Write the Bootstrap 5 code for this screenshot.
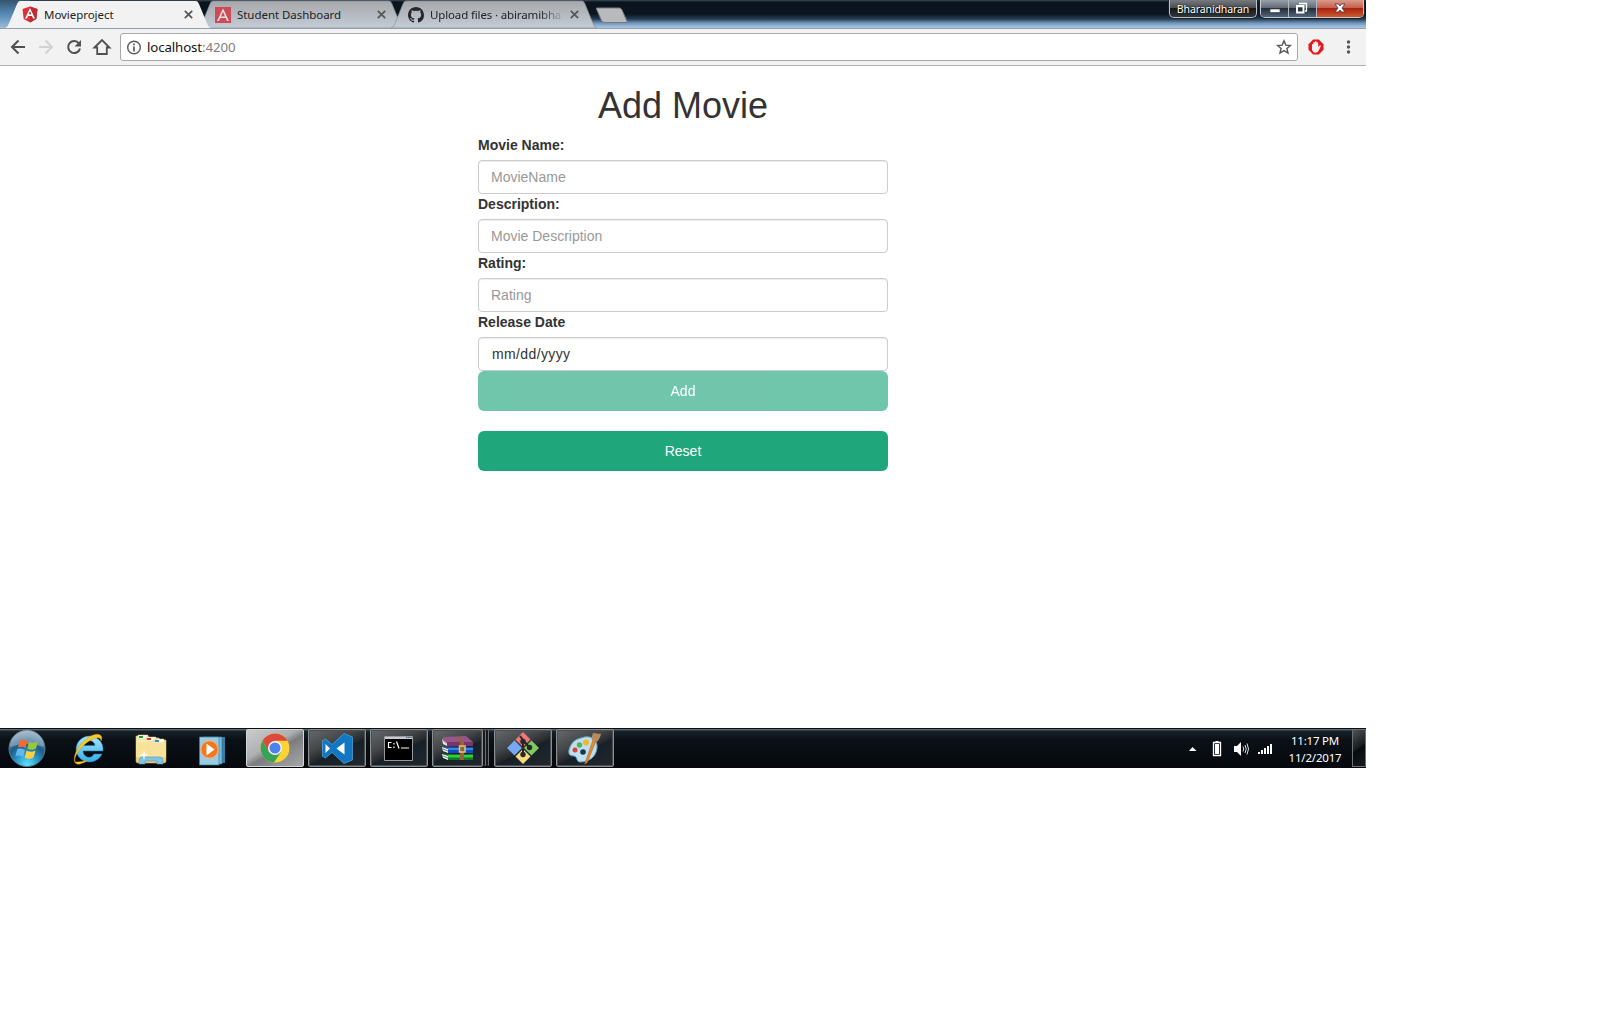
<!DOCTYPE html>
<html lang="en">
<head>
<meta charset="utf-8">
<title>Movieproject</title>
<link rel="stylesheet" href="https://cdn.jsdelivr.net/npm/bootstrap@5.3.0/dist/css/bootstrap.min.css">
<script src="https://cdn.jsdelivr.net/npm/bootstrap@5.3.0/dist/js/bootstrap.bundle.min.js"></script>
<style>
body{background:#fff;overflow:hidden}
svg{display:block;flex:none}
.desk{width:1366px;height:768px;font-family:"Noto Sans","Open Sans",sans-serif;color:#222}
.strip{height:28px;padding-left:5px;background:linear-gradient(#3b4b5a 0,#0b141d 2px,#0b1520 14px,#263c52 19px,#6f94b8 23px,#a3c2e2 27px);position:relative}
.strip:before{content:"";position:absolute;left:0;top:0;width:30px;height:28px;background:linear-gradient(#34536e,#5689b4 50%,#9dbbd9)}
.tab-item{width:206px;height:28px;margin-right:-13px;padding:1px 15px 0 17px;position:relative;font-size:11.5px;letter-spacing:-.05px}
.tab-item .shape{position:absolute;left:0;top:0}
.tab-item .tab-text{position:relative;white-space:nowrap;line-height:27px;margin-left:6px;width:134px;margin-right:6px}
.tab-item .ico,.tab-item .x{position:relative}
.front{z-index:2}
.tab-item .fade-text{letter-spacing:-.14px;-webkit-mask-image:linear-gradient(90deg,#000 82%,rgba(0,0,0,.15) 98%)}
.newtab{margin:7px 0 0 12px}
.user-btn{width:88px;height:18px;border:1px solid #b9c0c6;border-top:0;border-radius:0 0 5px 5px;background:linear-gradient(#777b7f,#4b4f53 45%,#15191d 50%,#32373c);color:#fff;font-size:10.5px;line-height:18px;text-align:center;box-shadow:0 0 0 1px #1a222b;text-shadow:0 0 2px #000;letter-spacing:-.1px}
.win-btns{width:104px;height:18px;margin:0 2px 0 3px;border:1px solid #c4cbd2;border-top:0;border-radius:0 0 5px 5px;overflow:hidden;box-shadow:0 0 0 1px #1a222b}
.win-btns>div{width:28px;background:linear-gradient(#98a0a8,#626c77 45%,#242d38 50%,#52657b);border-right:1px solid #b0b8c0}
.win-btns>.close-w{width:47px;border:0;background:linear-gradient(#d99b8d,#c7604b 45%,#a92310 50%,#cf5a30)}
.toolbar-b{height:38px;background:#f2f2f2;border-top:1px solid #93a0ac;border-bottom:1px solid #b0b0b0;padding-left:8px}
.omni{width:1178px;height:28px;border:1px solid #a9a9a9;border-radius:3px;background:#fff;font-size:13.3px;color:#111;padding:0 5px 0 6px}
.omni .url-text{margin:1px 0 0 5px;letter-spacing:-.13px}
.omni .port{color:#808080}
.page-area{height:662px;font-family:"Liberation Sans",Arial,sans-serif;font-size:14px;line-height:20px;color:#333;padding-top:20px}
.page-area h1{font-size:36px;line-height:39px;margin:0 0 10px;font-weight:400;color:#333}
.form-col{width:410px}
.form-col label{display:block;font-weight:700;margin-bottom:5px;line-height:20px}
.form-col .form-control{height:34px;padding:6px 12px;font-size:14px;line-height:20px;border:1px solid #ccc;border-radius:4px;color:#333;box-shadow:inset 0 1px 1px rgba(0,0,0,.075)}
.form-col .form-control::placeholder{color:#999}
.form-col .date-box{padding-left:13px;letter-spacing:.38px}
.form-col .btn-green{height:40px;background:#20a67b;color:#fff;border:0;border-radius:6px;font-size:14px;padding:0}
.form-col .btn-green:disabled{background:#20a67b;opacity:.64;color:#fff}
.form-col .reset-btn{margin-top:20px}
.taskbar{height:40px;background:linear-gradient(#0a1114 0,#0a1114 1px,#66757b 1px,#4c5a60 2px,#182228 3px,#0a1016 12px,#05090d);position:relative}
.tb{width:58px;height:38px;margin:1px 4px 0 0;border:1px solid #8c8f92;border-radius:2px;background:linear-gradient(155deg,#66696c 0,#44484b 35%,#23272a 55%,#17202a 56%,#22282c);display:flex;align-items:center;justify-content:center;box-shadow:inset 0 0 0 1px #4b4f52}
.tb.on{background:linear-gradient(150deg,#cacbcc 0,#aeb0b1 42%,#7a7c7e 55%,#8f9193 75%,#a5a6a7);border-color:#d5d5d5;box-shadow:none}
.tb.stack{width:51px;margin-right:11px;box-shadow:inset 0 0 0 1px #4b4f52,3px 0 0 -1px #15191c,4px 0 0 -1px #6c7073,6px 0 0 -1px #15191c,7px 0 0 -1px #6c7073}
.clock{font-size:11.5px;line-height:17px;color:#fff;width:70px;margin-right:2px;text-align:center;letter-spacing:-.2px}
.peek{width:14px;height:38px;margin-top:1px;border:1px solid #6b7174;background:linear-gradient(145deg,#4d5356,#15191c 50%,#080b0e 51%,#181b1e)}
</style>
</head>
<body>
<div class="desk d-flex flex-column">
  <div class="strip d-flex">
    <div class="tab-item front d-flex align-items-center">
      <svg class="shape" width="206" height="28"><path d="M0 28C3 27 3 25 5 21L12 4Q13 1 15 1H191Q193 1 194 4L201 21C203 25 203 27 206 28Z" fill="#f2f2f2"/></svg>
      <svg class="ico" width="16" height="17" viewBox="0 0 16 17"><path d="M8 0.500 15.500 3 14.300 13 8 16.500 1.700 13 .5 3Z" fill="#dd3037"/><path d="M8 .5 15.500 3 14.300 13 8 16.500Z" fill="#bd2935"/><path d="M3 12.500 8 2 13 12.500H11L10 10H6L5 12.500ZM6.700 8.300H9.300L8 5Z" fill="#fff" fill-rule="evenodd"/></svg>
      <span class="tab-text">Movieproject</span>
      <svg class="x" width="9" height="9" stroke="#555" stroke-width="1.700"><path d="M.8.8 8.200 8.200M8.200.8.8 8.200"/></svg>
    </div>
    <div class="tab-item d-flex align-items-center">
      <svg class="shape" width="206" height="28"><defs><linearGradient id="tg" x2="0" y2="1"><stop stop-color="#a6a7aa"/><stop offset="1" stop-color="#c4ccd7"/></linearGradient></defs><path d="M0 28C3 27 3 25 5 21L12 4Q13 1 15 1H191Q193 1 194 4L201 21C203 25 203 27 206 28Z" fill="url(#tg)" stroke="#878d94" stroke-width=".7"/></svg>
      <svg class="ico" width="16" height="16"><path d="M0 0H16V16H0Z" fill="#cf4a57"/><path d="M2 14 8 1.500 14 14H12L10.800 11H5.200L4 14ZM6 9.400H10L8 4.800Z" fill="#e8e0e3" fill-rule="evenodd"/></svg>
      <span class="tab-text">Student Dashboard</span>
      <svg class="x" width="9" height="9" stroke="#555" stroke-width="1.700"><path d="M.8.8 8.200 8.200M8.200.8.8 8.200"/></svg>
    </div>
    <div class="tab-item d-flex align-items-center">
      <svg class="shape" width="206" height="28"><path d="M0 28C3 27 3 25 5 21L12 4Q13 1 15 1H191Q193 1 194 4L201 21C203 25 203 27 206 28Z" fill="url(#tg)" stroke="#878d94" stroke-width=".7"/></svg>
      <svg class="ico" width="16" height="16" viewBox="0 0 16 16"><path fill="#25282c" d="M8 0C3.580 0 0 3.580 0 8c0 3.540 2.290 6.530 5.470 7.590.4.070.55-.17.55-.38 0-.19-.01-.82-.01-1.490-2.010.37-2.530-.49-2.690-.94-.09-.23-.48-.94-.82-1.130-.28-.15-.68-.52-.01-.53.63-.01 1.080.58 1.230.82.72 1.210 1.870.87 2.330.66.070-.52.28-.87.51-1.070-1.780-.2-3.640-.89-3.640-3.950 0-.87.31-1.590.82-2.150-.08-.2-.36-1.020.08-2.120 0 0 .67-.21 2.200.82.640-.18 1.320-.27 2-.27s1.360.09 2 .27c1.530-1.040 2.200-.82 2.200-.82.44 1.100.16 1.920.08 2.120.51.56.82 1.270.82 2.150 0 3.070-1.870 3.750-3.650 3.950.29.25.54.73.54 1.480 0 1.070-.01 1.930-.01 2.200 0 .21.15.46.55.38A8.010 8.010 0 0 0 16 8c0-4.420-3.580-8-8-8Z"/></svg>
      <span class="tab-text fade-text">Upload files · abiramibha</span>
      <svg class="x" width="9" height="9" stroke="#555" stroke-width="1.700"><path d="M.8.8 8.200 8.200M8.200.8.8 8.200"/></svg>
    </div>
    <svg class="newtab" width="34" height="17"><path d="M.5 1H23.500Q25 1 26 3L31.500 15.500H9Q6.500 15.500 5.500 13.500L.5 2Z" fill="#b9babb" stroke="#777c82"/></svg>
    <div class="user-btn ms-auto">Bharanidharan</div>
    <div class="win-btns d-flex">
      <div><svg width="27" height="18"><path d="M9 9H19V12.500H9Z" fill="#fff" stroke="#414953" stroke-width=".7"/></svg></div>
      <div><svg width="27" height="18" fill="none"><path d="M10 3.500H17.500V11H16" stroke="#fff" stroke-width="1.300"/><path d="M8 6H14.500V12.500H8Z" stroke="#fff" stroke-width="1.900"/></svg></div>
      <div class="close-w"><svg width="47" height="18"><path d="M18 4H21.500L23 6 24.500 4H28L25 8 28 12H24.500L23 10 21.500 12H18L21 8Z" fill="#fff" stroke="#4f3c4c" stroke-width=".9"/></svg></div>
    </div>
  </div>

  <div class="toolbar-b d-flex align-items-center">
    <svg width="112" height="20" fill="none" stroke="#505050" stroke-width="2">
      <path d="M17 10H4.500M10.500 3.500 4 10 10.500 16.500"/>
      <path d="M31 10H43.500M37.500 3.500 44 10 37.500 16.500" stroke="#d2d2d2"/>
      <path d="M71 6.500A6 6 0 1 0 72 11.500"/><path d="M73 3V9.500H66.500Z" fill="#505050" stroke="none"/>
      <path d="M86.500 10.500 94 3 101.500 10.500H98.800V17H89.200V10.500Z" stroke-width="1.800" fill="#f2f2f2"/>
    </svg>
    <div class="omni d-flex align-items-center">
      <svg width="15" height="15" fill="none" stroke="#5a5a5a"><circle cx="7" cy="7.500" r="6.300" stroke-width="1.400"/><path d="M7 6.500V11.500M7 3.500V5.200" stroke-width="1.700"/></svg>
      <span class="url-text">localhost<span class="port">:4200</span></span>
      <svg class="ms-auto" width="16" height="16" fill="none" stroke="#555" stroke-width="1.400"><path d="M8 1.800 9.800 6.100 14.400 6.500 10.900 9.500 12 14 8 11.600 4 14 5.100 9.500 1.600 6.500 6.200 6.100Z"/></svg>
    </div>
    <svg width="68" height="20"><path d="M15.200 2.500H20.800L25.500 7.200V12.800L20.800 17.500H15.200L10.500 12.800V7.200Z" fill="#e41a1a"/><path d="M14 13V7.500Q14.700 6.500 15.400 7.500V5.500Q16.200 4.500 17 5.500V4.500Q17.800 3.500 18.600 4.500V5.500Q19.500 4.700 20.200 5.800V10L21.500 8.500Q23 8 22.800 9.200L20.500 14Q18.500 16.500 15.500 15.200Z" fill="#f7f0f0"/><g fill="#555"><circle cx="50.500" cy="5" r="1.700"/><circle cx="50.500" cy="10" r="1.700"/><circle cx="50.500" cy="15" r="1.700"/></g></svg>
  </div>

  <main class="page-area">
    <form class="form-col mx-auto">
      <h1 class="text-center">Add Movie</h1>
      <label for="mn">Movie Name:</label>
      <input id="mn" class="form-control" placeholder="MovieName">
      <label for="md">Description:</label>
      <input id="md" class="form-control" placeholder="Movie Description">
      <label for="mr">Rating:</label>
      <input id="mr" class="form-control" placeholder="Rating">
      <label>Release Date</label>
      <div class="form-control date-box">mm/dd/yyyy</div>
      <button type="button" class="btn btn-green d-block w-100" disabled>Add</button>
      <button type="reset" class="btn btn-green d-block w-100 reset-btn">Reset</button>
    </form>
  </main>

  <div class="taskbar d-flex">
    <svg width="246" height="40">
      <defs>
        <radialGradient id="orb" cx=".5" cy=".95" r=".95"><stop stop-color="#5fe6ff"/><stop offset=".35" stop-color="#2a93c4"/><stop offset=".6" stop-color="#1f5b88"/><stop offset="1" stop-color="#8fa9bb"/></radialGradient>
        <linearGradient id="ie" x2="0" y2="1"><stop stop-color="#a6e7fc"/><stop offset="1" stop-color="#34aeea"/></linearGradient>
        <linearGradient id="fd" x2="0" y2="1"><stop stop-color="#fdf3bd"/><stop offset="1" stop-color="#efcf72"/></linearGradient>
      </defs>
      <circle cx="27" cy="20.500" r="18" fill="url(#orb)" stroke="#56788e"/>
      <path d="M10 19A17 17 0 0 1 44 19Q27 13 10 19Z" fill="#fff" opacity=".28"/>
      <path d="M20 12Q24 10.500 27.500 13L25.500 20Q22 18 18 19.500Z" fill="#f06a31"/><path d="M29 13.500Q33 16 38 13.500L36 20.500Q31.500 23 27.300 20.500Z" fill="#95c83d"/><path d="M17.300 21Q21 19.500 25 22L23 29Q19.500 26.500 15.500 28Z" fill="#62b8ee"/><path d="M26.700 22.500Q31 25 35.500 22.500L33.500 29.500Q29.500 32 24.700 29.500Z" fill="#ffd13e"/>
      <path d="M102 26A13.500 13 0 1 1 103 20V23H83C83 29 91 32 94 26ZM83.500 17.500H95C94 11 85 11 83.500 17.500Z" fill="url(#ie)" fill-rule="evenodd" stroke="#147bb6" stroke-width=".5"/>
      <path d="M77 34C72 35 76 24 84 17C92 10 101 7 101 13C105 5 94 3 84 13C74 22 70 38 80 36C83 35 86 34 88 32C84 33 80 34 77 34Z" fill="#f8cb2b" stroke="#cf8c12" stroke-width=".4"/>
      <path d="M136 8H148L150 10H159L160 12H166V33Q166 35 164 35H138Q136 35 136 33Z" fill="url(#fd)" stroke="#caa85a" stroke-width=".6"/>
      <path d="M138 7H148V11H138ZM146 9H156V13H146ZM154 11H164V15H154Z" fill="#fffef0" stroke="#d1bd80" stroke-width=".5"/><path d="M139 8H143V10H139Z" fill="#179e2d"/><path d="M147 10H151V12H147Z" fill="#d63a22"/><path d="M155 12H159V14H155Z" fill="#3887d9"/>
      <path d="M136 14.500H166V29H136Z" fill="#f7e29a"/>
      <path d="M139 36V33Q139 29 142 29H160Q163 29 163 33V36H157V33H145V36Z" fill="#83c4e5" stroke="#4d93bd" stroke-width=".6"/><path d="M144 22 145 26 149 27 145 28 144 32 143 28 139 27 143 26Z" fill="#fff"/>
      <path d="M205 9H225V35H205Z" fill="#357fa9"/><path d="M203 9H222V36H203Z" fill="#7dbddb" stroke="#2e769b" stroke-width=".7"/><path d="M199.500 9H219V37H199.500Z" fill="#9bcbe2" stroke="#387e9f" stroke-width=".7"/>
      <circle cx="209.500" cy="21.500" r="8.700" fill="#f07820" stroke="#fbb57b"/><path d="M206.500 15.500 214.500 21.500 206.500 27.500Z" fill="#fff"/>
    </svg>
    <div class="tb on"><svg width="30" height="30" viewBox="0 0 30 30"><circle cx="15" cy="15" r="14.500" fill="#fcd335"/><path d="M2.500 7.700A14.500 14.500 0 0 1 27.600 7.700H15L8.700 18.600Z" fill="#dc493d"/><path d="M2.500 7.700A14.500 14.500 0 0 0 14 29.500L21.300 18.600H8.700Z" fill="#36a357"/><circle cx="15" cy="15" r="7" fill="#f5f5f5"/><circle cx="15" cy="15" r="5.500" fill="#4b82ec"/></svg></div>
    <div class="tb"><svg width="31" height="31" viewBox="0 0 31 31"><path d="M22 .5 30.500 4V27L22 30.500 10 19.500 3.500 25 .5 23.300V7.700L3.500 6 10 11.500Z" fill="#1277c2" stroke="#5aa7df" stroke-width=".7"/><path d="M22.500 9.500V21.500L14.500 15.500ZM3.500 11V20L8 15.500Z" fill="#fff"/></svg></div>
    <div class="tb"><svg width="30" height="25"><path d="M.5.5H28.500V24.500H.5Z" fill="#000" stroke="#999"/><path d="M1 1H28V3H1Z" fill="#c7cad1"/><path d="M22 1.500H23.500M24.200 1.500H25.700M26.300 1.500H27.500" stroke="#335b9b"/><path d="M7.500 6.500H4.500V11.500H7.500M10 7V8.500M10 10.500V12M12.500 5.500 15 12.500M17 12H25" stroke="#fff" stroke-width="1.200" fill="none"/></svg></div>
    <div class="tb stack"><svg width="32" height="25"><path d="M1 1 24 0 31 6V9H6L1 5Z" fill="#96568a"/><path d="M5 6H31V10H5Z" fill="#793769"/><path d="M0 3 5 7V10L1 8Z" fill="#e9deda"/><path d="M1 11H31V17H5Z" fill="#1749bf"/><path d="M6 12H31V14H6Z" fill="#3487e7"/><path d="M0 11 6 13V17L1 15Z" fill="#eee"/><path d="M1 18H31V24H5Z" fill="#147925"/><path d="M6 19H31V21.500H6Z" fill="#34cb47"/><path d="M0 18 6 20V24L1 22Z" fill="#eee"/><path d="M1 4 6 8M1 13 6 15M1 20 6 22" stroke="#555" stroke-width=".7"/><path d="M17 1 22 6V24H18V6L14 1Z" fill="#9a6135"/><path d="M17.500 10H23V16H17.500Z" fill="none" stroke="#e1c878" stroke-width="1.500"/></svg></div>
    <div class="tb"><svg width="32" height="32"><path d="M16 0 23.500 7.500 16 15 8.500 7.500Z" fill="#f27779"/><path d="M24.500 8.500 32 16 24.500 23.500 17 16Z" fill="#83c95f"/><path d="M7.500 8.500 15 16 7.500 23.500 0 16Z" fill="#76a8f4"/><path d="M16 17 23.500 24.500 16 32 8.500 24.500Z" fill="#f8dc7c"/><path d="M16 9V23M13 4 16 8 22 15" stroke="#252a2d" stroke-width="2" fill="none"/><circle cx="16" cy="9.500" r="2.700" fill="#252a2d"/><circle cx="22.500" cy="15.500" r="2.700" fill="#252a2d"/><circle cx="16" cy="22.500" r="2.700" fill="#252a2d"/></svg></div>
    <div class="tb"><svg width="34" height="32"><path d="M13 6C23 2 30 8 29 16C28 25 21 30 12 30C8 30 10 25 6 24C0 24 0 20 2 15C4 10 8 7 13 6Z" fill="#bddff0" stroke="#659fbf"/><circle cx="7" cy="18" r="2.500" fill="#dd4034"/><circle cx="11.500" cy="13" r="2.700" fill="#54b34b"/><circle cx="18" cy="10.500" r="3" fill="#f1b629"/><circle cx="15" cy="20" r="2.800" fill="#16374d"/><path d="M17 31 25 8 28 9 19 31 16 32Z" fill="#e9892d" stroke="#a65618" stroke-width=".5"/><path d="M24 8C23 5 25 2 25 1L33 2C32 5 31 9 28 10Z" fill="#b98a60"/></svg></div>
    <svg class="ms-auto" width="96" height="40"><path d="M5 23 8.500 19 12.500 23Z" fill="#fff" /><path d="M29.500 14.500H36.500V27.500H29.500Z" fill="none" stroke="#fff" stroke-width="1.300"/><path d="M31.500 13H34.500V15H31.500ZM31 16H35V26H31Z" fill="#fff"/><path d="M50 18H53L57 14V28L53 24H50Z" fill="#fff"/><path d="M59 18.500Q60.500 21 59 23.500M61 17Q63.500 21 61 25M63 15.500Q66 21 63 26.500" fill="none" stroke="#ddd" stroke-width="1"/><path d="M74 24H76V26H74ZM77 22H79V26H77ZM80 20H82V26H80ZM83 18H85V26H83ZM86 16H88V26H86Z" fill="#fff"/></svg>
    <div class="clock pt-1">11:17 PM<br>11/2/2017</div>
    <div class="peek"></div>
  </div>
</div>
</body>
</html>
